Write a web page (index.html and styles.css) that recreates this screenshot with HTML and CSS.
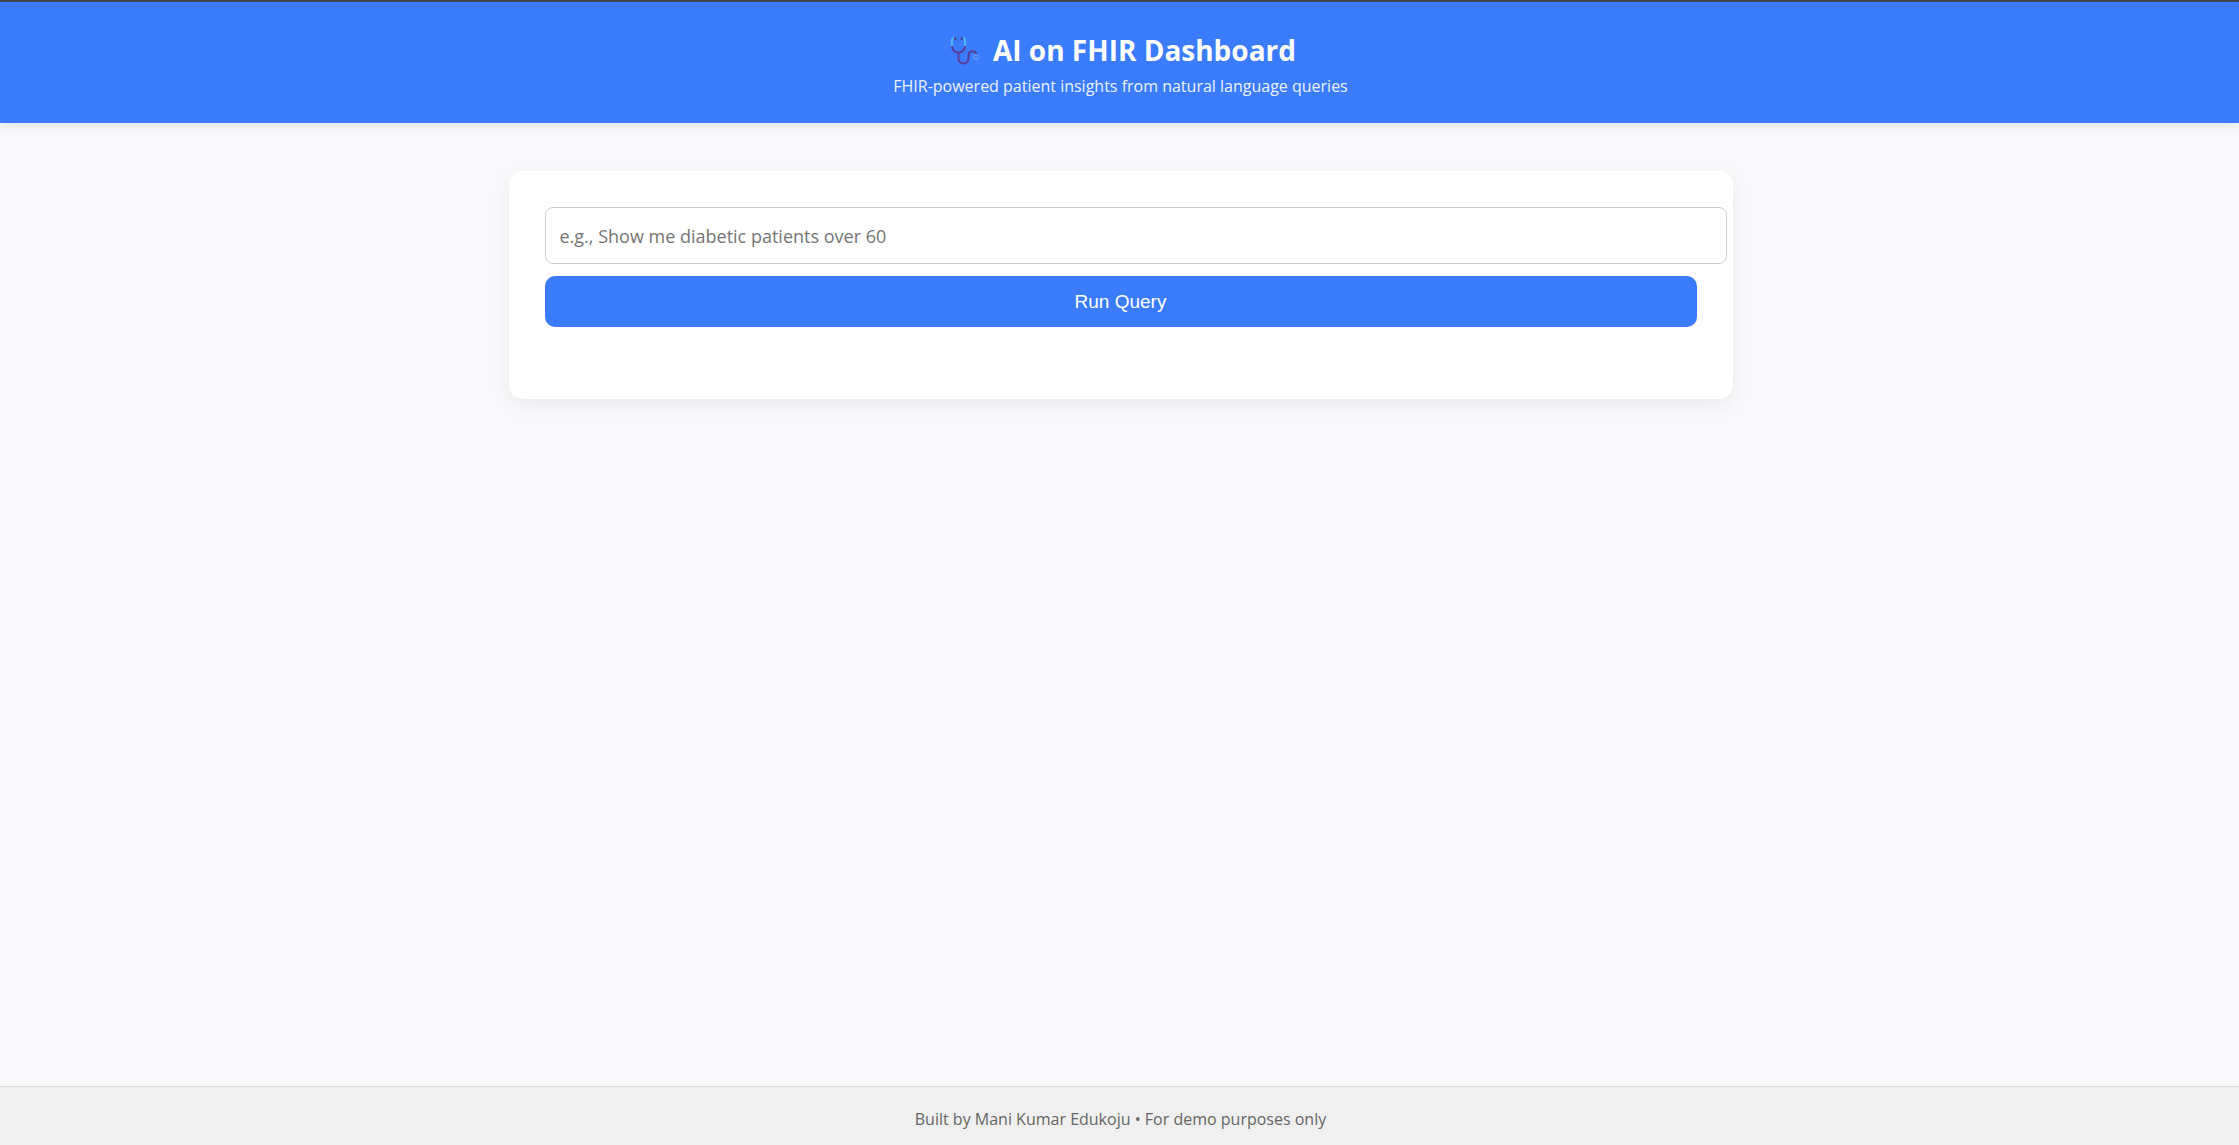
FILE: index.html
```html
<!DOCTYPE html>
<html lang="en">
<head>
  <meta charset="utf-8">
  <meta name="viewport" content="width=device-width, initial-scale=1">
  <title>AI on FHIR Dashboard</title>
  <link rel="stylesheet" href="styles.css">
</head>
<body>
  <header class="site-header">
    <h1 class="site-title">
      <svg class="title-icon" viewBox="0 0 28 28" fill="none" stroke-linecap="round" aria-hidden="true">
        <path d="M7.500 16v5.500a5 5 0 0 0 10 0v-2.500c0-3 1.500-4.800 4-4.800s3.500 1.200 4 3.300" stroke="#593a9b" stroke-width="2"/>
        <path d="M1 9c0 4 3 6.600 6.500 6.600s6.500-2.600 6.500-6.600" stroke="#593a9b" stroke-width="2"/>
        <path d="M1 9V3Q1 1 3.500 1M14 9V3Q14 1 11.500 1" stroke="#4fb4f4" stroke-width="2" stroke-linecap="butt"/>
        <path d="M4.200 1.300v.6M10.800 1.300v.6" stroke="#46397f" stroke-width="2.200"/>
        <circle cx="25" cy="20" r="3" fill="#5795ff"/>
        <path d="M23.700 20h2.600" stroke="#4577dd" stroke-width="1.500"/>
      </svg>
      AI on FHIR Dashboard
    </h1>
    <p class="site-subtitle">FHIR-powered patient insights from natural language queries</p>
  </header>

  <main class="content">
    <form class="query-card">
      <input class="query-input" type="text" aria-label="Query" placeholder="e.g., Show me diabetic patients over 60">
      <button class="query-button" type="button">Run Query</button>
    </form>
  </main>

  <footer class="site-footer">Built by Mani Kumar Edukoju • For demo purposes only</footer>
</body>
</html>
```

FILE: styles.css
```css
body {
  margin: 0;
  min-height: 100vh;
  box-sizing: border-box;
  display: flex;
  flex-direction: column;
  border-top: 2px solid #444;
  background: #f9f9fc;
  font-family: "Segoe UI", "Open Sans", "Noto Sans", sans-serif;
}

.site-header {
  padding: 28px 24px 25px 26px;
  background: #3b7cff;
  color: #fff;
  text-align: center;
  box-shadow: 0 2px 12px rgba(0, 0, 0, 0.1);
}

.site-title {
  display: flex;
  align-items: center;
  justify-content: center;
  gap: 14px;
  margin: 0;
  padding-left: 6px;
  font-size: 28px;
  line-height: 40px;
  font-weight: 700;
}

.title-icon {
  width: 28px;
  height: 28px;
  margin-top: 2px;
  overflow: visible;
}

.site-subtitle {
  margin: 4px 0 0;
  font-size: 16px;
  line-height: 24px;
  opacity: 0.9;
}

.content {
  flex: 1;
  padding: 48px 24px 48px 26px;
}

.query-card {
  max-width: 1152px;
  margin: 0 auto;
  padding: 36px 36px 72px;
  border-radius: 14px;
  background: #fff;
  box-shadow: 0 6px 20px rgba(0, 0, 0, 0.06);
}

.query-input {
  display: block;
  width: 100%;
  height: 27px;
  padding: 14px;
  border: 1px solid #ccc;
  border-radius: 8px;
  background: #fff;
  font-family: inherit;
  font-size: 18px;
}

.query-input::placeholder {
  color: #757575;
}

.query-button {
  display: block;
  width: 100%;
  height: 51px;
  margin-top: 12px;
  border: 0;
  border-radius: 10px;
  background: #3b7cff;
  color: #fff;
  font-family: Arial, "Liberation Sans", sans-serif;
  font-size: 19px;
}

.site-footer {
  padding: 20px 24px 14px 26px;
  border-top: 1px solid #ddd;
  background: #f0f0f0;
  color: #666;
  font-size: 16px;
  line-height: 24px;
  text-align: center;
}
```
